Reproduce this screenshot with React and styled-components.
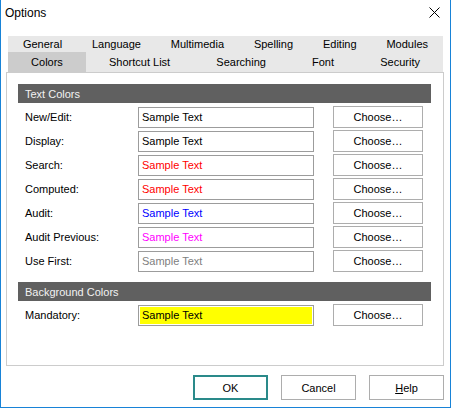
import React from 'react';
import styled, { createGlobalStyle } from 'styled-components';

const GlobalStyle = createGlobalStyle`
	* {
		box-sizing: border-box;
	}
	body {
		margin: 0;
		background: #ffffff;
		font-family: "Liberation Sans", Arial, sans-serif;
	}
`;

const Window = styled.div`
	width: 451px;
	height: 408px;
	background: #ffffff;
	border: 1px solid #1883d7;
	border-top: none;
	display: flex;
	flex-direction: column;
`;

const TitleBar = styled.div`
	height: 36px;
	display: flex;
	justify-content: space-between;
	align-items: flex-start;
	padding: 6px 9px 0 4px;
`;

const Title = styled.span`
	font-size: 12px;
	line-height: 14px;
	color: #000000;
`;

const CloseBtn = styled.button`
	width: 12px;
	height: 12px;
	padding: 0;
	margin-top: 1px;
	border: none;
	background: transparent;
	display: flex;
`;

const Body = styled.div`
	padding: 0 6px 0 5px;
	display: flex;
	flex-direction: column;
`;

const TabStrip = styled.div`
	margin: 0 1px 0 2px;
	display: flex;
	flex-direction: column;
`;

const TabRow = styled.div`
	display: flex;
	height: ${({ $h }) => $h}px;
	background: #e8e8e8;
`;

const Tab = styled.button`
	flex: 1 1 auto;
	padding: 0;
	border: none;
	font-family: inherit;
	font-size: 11px;
	color: #000000;
	background: ${({ $active }) => ($active ? '#cccccc' : 'transparent')};
	display: flex;
	align-items: center;
	justify-content: center;
	white-space: nowrap;
`;

const Panel = styled.div`
	height: 294px;
	border: 1px solid #cccccc;
	padding: 11px 12px 0 11px;
	display: flex;
	flex-direction: column;
`;

const SectionHeader = styled.div`
	height: 19px;
	background: #606060;
	color: #f2f2f2;
	font-size: 11px;
	padding-left: 7px;
	display: flex;
	align-items: center;
	margin-top: ${({ $gap }) => $gap || 0}px;
`;

const Rows = styled.div`
	display: flex;
	flex-direction: column;
	gap: 2px;
	margin-top: 3px;
`;

const Row = styled.div`
	display: flex;
	align-items: center;
	height: 22px;
	padding-left: 7px;
`;

const Label = styled.span`
	width: 113px;
	font-size: 11px;
	color: #000000;
`;

const Sample = styled.div`
	width: 176px;
	height: 21px;
	border: 1px solid #9c9c9c;
	background: ${({ $bg }) => $bg || '#ffffff'};
	box-shadow: ${({ $bg }) => ($bg ? 'inset 0 0 0 1px #ffffff' : 'none')};
	color: ${({ $color }) => $color};
	font-size: 11px;
	padding-left: 3px;
	display: flex;
	align-items: center;
`;

const ChooseBtn = styled.button`
	width: 90px;
	height: 22px;
	margin-left: 19px;
	border: 1px solid #adadad;
	background: #ffffff;
	font-family: inherit;
	font-size: 11px;
	color: #000000;
	padding: 0;
`;

const Footer = styled.div`
	display: flex;
	justify-content: flex-end;
	gap: 13px;
	margin-top: 9px;
`;

const DialogBtn = styled.button`
	width: 75px;
	height: 25px;
	padding: 0;
	border: ${({ $default }) => ($default ? '2px solid #2a8a8a' : '1px solid #adadad')};
	background: #ffffff;
	font-family: inherit;
	font-size: 11px;
	color: #000000;
	u {
		text-decoration: underline;
	}
`;

const rowOne = ['General', 'Language', 'Multimedia', 'Spelling', 'Editing', 'Modules'];
const rowTwo = ['Colors', 'Shortcut List', 'Searching', 'Font', 'Security'];

const textColors = [
	{ label: 'New/Edit:', color: '#000000' },
	{ label: 'Display:', color: '#000000' },
	{ label: 'Search:', color: '#ff0000' },
	{ label: 'Computed:', color: '#ff0000' },
	{ label: 'Audit:', color: '#0000ff' },
	{ label: 'Audit Previous:', color: '#ff00ff' },
	{ label: 'Use First:', color: '#808080' },
];

function ColorRow({ label, color, bg }) {
	return (
		<Row>
			<Label>{label}</Label>
			<Sample $color={color} $bg={bg}>Sample Text</Sample>
			<ChooseBtn type="button">Choose…</ChooseBtn>
		</Row>
	);
}

function App() {
	return (
		<>
			<GlobalStyle />
			<Window>
				<TitleBar>
					<Title>Options</Title>
					<CloseBtn type="button" aria-label="Close">
						<svg width="11" height="11" viewBox="0 0 11 11">
							<path d="M0.5 0.5 L10.5 10.5 M10.5 0.5 L0.5 10.5" stroke="#000" strokeWidth="1" />
						</svg>
					</CloseBtn>
				</TitleBar>
				<Body>
					<TabStrip>
						<TabRow $h={16}>
							{rowOne.map((t) => (
								<Tab key={t} type="button">{t}</Tab>
							))}
						</TabRow>
						<TabRow $h={20}>
							{rowTwo.map((t) => (
								<Tab key={t} type="button" $active={t === 'Colors'}>{t}</Tab>
							))}
						</TabRow>
					</TabStrip>
					<Panel>
						<SectionHeader>Text Colors</SectionHeader>
						<Rows>
							{textColors.map((r) => (
								<ColorRow key={r.label} label={r.label} color={r.color} />
							))}
						</Rows>
						<SectionHeader $gap={10}>Background Colors</SectionHeader>
						<Rows>
							<ColorRow label="Mandatory:" color="#000000" bg="#ffff00" />
						</Rows>
					</Panel>
					<Footer>
						<DialogBtn type="button" $default>OK</DialogBtn>
						<DialogBtn type="button">Cancel</DialogBtn>
						<DialogBtn type="button"><u>H</u>elp</DialogBtn>
					</Footer>
				</Body>
			</Window>
		</>
	);
}

export default App;
